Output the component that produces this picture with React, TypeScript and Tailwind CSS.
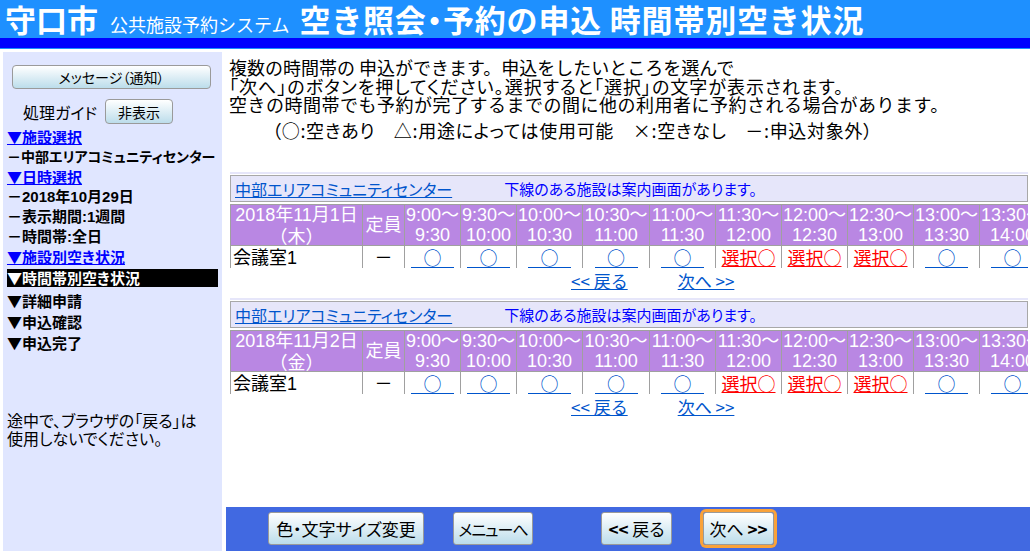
import React from "react";

type Col = { a: string; b: string; w: string; s: "o" | "s" };

const COLS: Col[] = [
  { a: "9:00～", b: "9:30", w: "w-[56px]", s: "o" },
  { a: "9:30～", b: "10:00", w: "w-[56px]", s: "o" },
  { a: "10:00～", b: "10:30", w: "w-[66px]", s: "o" },
  { a: "10:30～", b: "11:00", w: "w-[67px]", s: "o" },
  { a: "11:00～", b: "11:30", w: "w-[66px]", s: "o" },
  { a: "11:30～", b: "12:00", w: "w-[66px]", s: "s" },
  { a: "12:00～", b: "12:30", w: "w-[66px]", s: "s" },
  { a: "12:30～", b: "13:00", w: "w-[66px]", s: "s" },
  { a: "13:00～", b: "13:30", w: "w-[66px]", s: "o" },
  { a: "13:30～", b: "14:00", w: "w-[66px]", s: "o" },
  { a: "14:00～", b: "14:30", w: "w-[66px]", s: "o" },
];

function Section({ date, day }: { date: string; day: string }) {
  return (
    <div className="ml-[4px] w-[798px]">
      <div className="border-t-[2px] border-[#E6E6FA] pt-[1px]">
        <div className="h-[27px] border border-[#A8A8A8] bg-[#E6E6FA] flex items-center whitespace-nowrap">
          <a className="ml-[4px] text-[16px] leading-[20px] text-[#0055CC] underline [font-feature-settings:'palt']">
            中部エリアコミュニティセンター
          </a>
          <span className="ml-[52px] text-[15px] leading-[20px] text-[#0000FF] [font-feature-settings:'palt']">
            下線のある施設は案内画面があります。
          </span>
        </div>
      </div>
      <div className="mt-[2px] h-[64px] w-[798px] overflow-hidden font-['Liberation_Sans','Noto_Sans_CJK_JP',sans-serif] text-[18px]">
        <div className="flex w-[1000px]">
          <div className="w-[133px] h-[42px] shrink-0 border border-[#A0A0A0] bg-[#B987E3] text-white flex flex-col items-center justify-center leading-[20px]">
            <span>{date}</span>
            <span className="font-['Noto_Sans_CJK_JP',sans-serif]">{day}</span>
          </div>
          <div className="w-[42px] h-[42px] shrink-0 border-y border-r border-[#A0A0A0] bg-[#B987E3] text-white flex items-center justify-center leading-[20px]">
            定員
          </div>
          {COLS.map((c) => (
            <div
              key={c.a}
              className={`${c.w} h-[42px] shrink-0 border-y border-r border-[#A0A0A0] bg-[#B987E3] text-white flex flex-col items-center justify-center leading-[20px] whitespace-nowrap`}
            >
              <span>{c.a}</span>
              <span>{c.b}</span>
            </div>
          ))}
        </div>
        <div className="flex w-[1000px]">
          <div className="w-[133px] h-[24px] shrink-0 border-x border-b border-[#A0A0A0] bg-white text-black flex items-center pl-[2px] leading-[20px]">
            会議室1
          </div>
          <div className="w-[42px] h-[24px] shrink-0 border-b border-r border-[#A0A0A0] bg-white text-black flex items-center justify-center leading-[20px]">
            －
          </div>
          {COLS.map((c) => (
            <div
              key={c.a}
              className={`${c.w} h-[24px] shrink-0 border-b border-r border-[#A0A0A0] bg-white flex items-center justify-center leading-[20px] font-['Noto_Sans_CJK_JP',sans-serif]`}
            >
              {c.s === "o" ? (
                <span className="inline-block w-[43px] text-center border-b border-[#0055CC] text-[#0055CC] leading-[19px]">
                  ○
                </span>
              ) : (
                <span className="text-[#FF0000] underline leading-[19px] whitespace-nowrap">選択○</span>
              )}
            </div>
          ))}
        </div>
      </div>
      <div className="h-[29px] flex items-start pt-[3px] pl-[341px] text-[17px] leading-[20px] text-[#0055CC] whitespace-nowrap">
        <a className="underline">&lt;&lt; 戻る</a>
        <a className="underline ml-[50px]">次へ &gt;&gt;</a>
      </div>
    </div>
  );
}

function Btn({ children, cls }: { children: React.ReactNode; cls: string }) {
  return (
    <button
      className={`h-[33px] border border-[#9A9A9A] rounded-[3px] bg-linear-to-b from-white to-[#BCDDEB] text-black leading-[20px] flex items-center justify-center whitespace-nowrap [font-feature-settings:'palt'] ${cls}`}
    >
      {children}
    </button>
  );
}

function Tri() {
  return <span className="font-['Noto_Sans_CJK_JP',sans-serif] [font-feature-settings:normal]">▼</span>;
}

export default function App() {
  return (
    <div className="w-[1030px] h-[551px] bg-white overflow-hidden font-['Noto_Sans_CJK_JP',sans-serif] text-black">
      <header>
        <div className="h-[38px] bg-[#1E90FF] flex items-baseline pl-[5px] text-white whitespace-nowrap overflow-hidden">
          <span className="text-[31px] font-bold leading-[38px]">守口市</span>
          <span className="ml-[12px] text-[18px] leading-[38px]">公共施設予約システム</span>
          <span className="ml-[10px] text-[31px] font-bold leading-[38px] tracking-[0.8px]">
            空き照会<span className="[font-feature-settings:'palt']">・</span>予約の申込 時間帯別空き状況
          </span>
        </div>
        <div className="h-[10px] bg-[#0000FF]" />
        <div className="h-[1px] bg-[#1E90FF]" />
      </header>
      <div className="flex mt-[3px] h-[499px]">
        <aside className="ml-[3px] w-[219px] shrink-0 bg-[#E0E6FF] flex flex-col">
          <button className="mt-[13px] ml-[9px] w-[199px] h-[24px] border border-[#9A9A9A] rounded-[4px] bg-linear-to-b from-white to-[#BCDDEB] text-[14px] leading-[18px] text-black flex items-center justify-center [font-feature-settings:'palt']">
            メッセージ（通知）
          </button>
          <div className="flex items-center mt-[10px] h-[25px]">
            <span className="ml-[20px] text-[16px] leading-[20px] [font-feature-settings:'palt']">処理ガイド</span>
            <button className="ml-[8px] w-[68px] h-[25px] border border-[#9A9A9A] rounded-[4px] bg-linear-to-b from-white to-[#BCDDEB] text-[14px] leading-[18px] text-black flex items-center justify-center">
              非表示
            </button>
          </div>
          <div className="mt-[3px] pl-[4px] font-bold text-[15px] leading-[20px] whitespace-nowrap font-['Liberation_Sans','Noto_Sans_CJK_JP',sans-serif] [font-feature-settings:'palt']">
            <div className="h-[20px] text-[#0000FF]"><span className="underline"><Tri />施設選択</span></div>
            <div className="h-[20px] text-[14px]">－中部エリアコミュニティセンター</div>
            <div className="h-[20px] text-[#0000FF]"><span className="underline"><Tri />日時選択</span></div>
            <div className="h-[20px]">－2018年10月29日</div>
            <div className="h-[20px]">－表示期間:1週間</div>
            <div className="h-[20px]">－時間帯:全日</div>
            <div className="h-[20px] text-[#0000FF]"><span className="underline"><Tri />施設別空き状況</span></div>
            <div className="mt-[2px] mr-[4px] h-[18px] bg-black text-white leading-[18px]"><Tri />時間帯別空き状況</div>
            <div className="mt-[3px] h-[21px] leading-[21px]"><Tri />詳細申請</div>
            <div className="h-[21px] leading-[21px]"><Tri />申込確認</div>
            <div className="h-[21px] leading-[21px]"><Tri />申込完了</div>
          </div>
          <div className="mt-[58px] pl-[4px] text-[16px] leading-[18px] [font-feature-settings:'palt']">
            <div>途中で、ブラウザの「戻る」は</div>
            <div>使用しないでください。</div>
          </div>
        </aside>
        <main className="flex-1 ml-[4px] flex flex-col min-w-0">
          <div className="pt-[6px] pl-[3px] text-[18px] leading-[18.5px] whitespace-nowrap">
            <p>複数の時間帯の 申込ができます。申込をしたいところを選んで</p>
            <p className="[font-feature-settings:'palt'] tracking-[1px]">
              「次へ」のボタンを押してください。選択すると「選択」の文字が表示されます。
            </p>
            <p className="tracking-[0.5px]">空きの時間帯でも予約が完了するまでの間に他の利用者に予約される場合があります。</p>
            <p className="mt-[7px] pl-[43px] [font-feature-settings:'palt'] tracking-[0.7px]">
              （○:空きあり　△:用途によっては使用可能　×:空きなし　－:申込対象外）
            </p>
          </div>
          <div className="mt-[33px]">
            <Section date="2018年11月1日" day="（木）" />
          </div>
          <div className="mt-[1px]">
            <Section date="2018年11月2日" day="（金）" />
          </div>
          <footer className="mt-auto h-[44px] bg-[#4169E1] flex items-start pt-[5px] pl-[42px]">
            <Btn cls="w-[156px] text-[17px]">色・文字サイズ変更</Btn>
            <Btn cls="ml-[29px] w-[80px] text-[16px] tracking-[-1px]">メニューへ</Btn>
            <Btn cls="ml-[68px] w-[71px] text-[17px]">
              <span className="font-bold">&lt;&lt;</span>&nbsp;戻る
            </Btn>
            <Btn cls="ml-[31px] w-[71px] text-[17px] ring-[3px] ring-[#F9A23A]">
              次へ&nbsp;<span className="font-bold">&gt;&gt;</span>
            </Btn>
          </footer>
        </main>
      </div>
    </div>
  );
}
